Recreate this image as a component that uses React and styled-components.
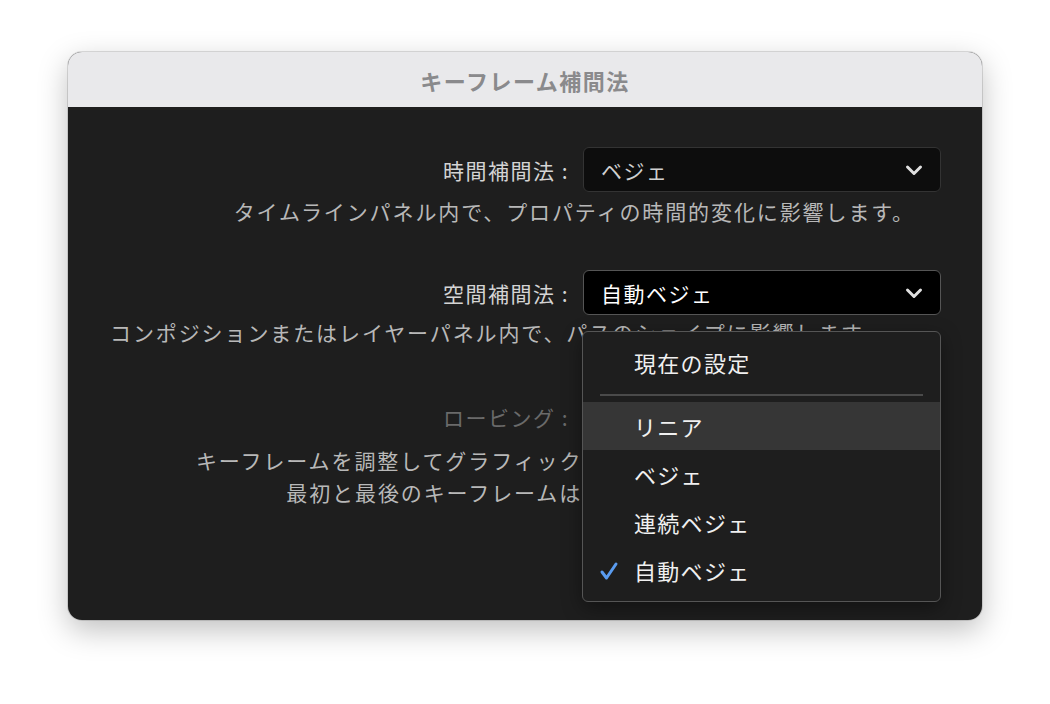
import React from "react";
import styled, { createGlobalStyle } from "styled-components";

const Global = createGlobalStyle`
  html, body { margin:0; padding:0; background:#fff; }
  body { font-family: "Noto Sans CJK JP", "Noto Sans", sans-serif; }
`;
const Page = styled.div`
  width:1050px; height:704px; display:flex; justify-content:center; padding-top:52px; box-sizing:border-box;
`;
const Win = styled.div`
  width:914px; height:568px; border-radius:14px; overflow:hidden; background:#1e1e1e;
  box-shadow:0 10px 30px rgba(0,0,0,0.25), 0 0 0 1px rgba(0,0,0,0.12);
  display:flex; flex-direction:column; position:relative;
`;
const Title = styled.div`
  height:55px; background:#e9e9eb; color:#8a8a8c; font-weight:700; font-size:22px;
  display:flex; align-items:center; justify-content:center; letter-spacing:1.5px;
`;
const Body = styled.div`
  padding:40px 41px 0 42px; display:flex; flex-direction:column;
`;
const Row = styled.div`
  display:flex; justify-content:flex-end; align-items:center; gap:14px; margin-top:${p=>p.mt||0}px;
`;
const Label = styled.div`
  font-size:21px; letter-spacing:1.5px; color:${p=>p.dim?"#6a6a6a":"#d4d4d4"};
`;
const Select = styled.div`
  width:358px; height:45px; box-sizing:border-box; border-radius:6px; border:1px solid ${p=>p.active?"#555":"#333"};
  background:${p=>p.active?"#000":"#0d0d0d"}; color:${p=>p.active?"#fff":"#d0d0d0"}; font-size:21px; letter-spacing:1.5px;
  display:flex; align-items:center; justify-content:space-between; padding:0 16px 0 17px;
`;
const Desc = styled.div`
  font-size:21px; letter-spacing:1.9px; color:#b8b8b8; text-align:${p=>p.align}; margin-top:${p=>p.mt||0}px;
  padding-right:${p=>p.pr||0}px; line-height:32px; white-space:nowrap;
`;
const Menu = styled.div`
  position:absolute; left:514px; top:279px; width:359px; height:271px; box-sizing:border-box;
  background:#1e1e1e; border:1px solid #555; border-radius:6px; padding-top:6px;
  box-shadow:0 6px 20px rgba(0,0,0,0.4);
`;
const Item = styled.div`
  height:48px; display:flex; align-items:center; padding-left:51px; position:relative;
  font-size:22px; letter-spacing:1.3px; color:#f0f0f0; background:${p=>p.hl?"#363636":"transparent"};
`;
const Sep = styled.div` height:2px; background:#4a4a4a; margin:8px 17px 6px; `;
const Check = styled.svg` position:absolute; left:16px; top:15px; `;

const Chevron = () => (
  <svg width="20" height="20" viewBox="0 0 20 20"><path d="M3.5 7l6.5 6.5L16.5 7" fill="none" stroke="#e0e0e0" strokeWidth="3" strokeLinecap="round" strokeLinejoin="round"/></svg>
);

export default function App(){
  return (<>
    <Global/>
    <Page><Win>
      <Title>キーフレーム補間法</Title>
      <Body>
        <Row><Label>時間補間法 :</Label><Select>ベジェ<Chevron/></Select></Row>
        <Desc align="right" pr={26} mt={3}>タイムラインパネル内で、プロパティの時間的変化に影響します。</Desc>
        <Row mt={43}><Label>空間補間法 :</Label><Select active>自動ベジェ<Chevron/></Select></Row>
        <Desc align="left" mt={1}>コンポジションまたはレイヤーパネル内で、パスのシェイプに影響します。</Desc>
        <Row mt={46}><Label dim>ロービング :</Label><Select style={{visibility:"hidden"}}/></Row>
        <Desc align="center" mt={5} pr={0}>キーフレームを調整してグラフィックの速度を滑らかにします。<br/>最初と最後のキーフレームは変更できません。</Desc>
      </Body>
      <Menu>
        <Item>現在の設定</Item>
        <Sep/>
        <Item hl>リニア</Item>
        <Item>ベジェ</Item>
        <Item>連続ベジェ</Item>
        <Item><Check width="20" height="20" viewBox="0 0 20 20"><path d="M3 11l4.5 6L17 3" fill="none" stroke="#5a9cf0" strokeWidth="3" strokeLinecap="round" strokeLinejoin="round"/></Check>自動ベジェ</Item>
      </Menu>
    </Win></Page>
  </>);
}
